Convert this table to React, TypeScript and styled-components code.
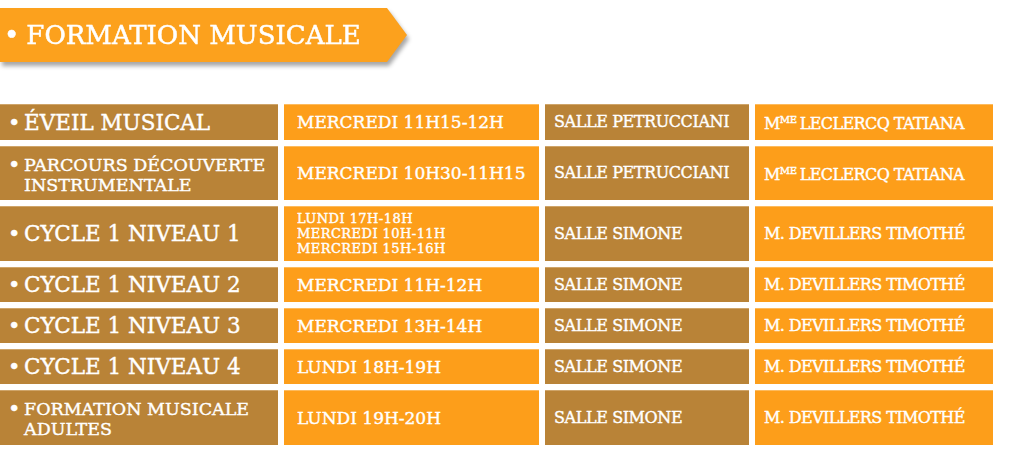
import React from "react";
import styled, { createGlobalStyle } from "styled-components";

const GlobalStyle = createGlobalStyle`
  html, body { margin: 0; padding: 0; background: #ffffff; }
  body { font-family: "DejaVu Serif", "Liberation Serif", serif; color: #ffffff; }
`;

const BROWN = "#b98337";
const ORANGE = "#fd9e1a";

const Page = styled.div`
  width: 1030px;
  height: 463px;
  padding-top: 8px;
  box-sizing: border-box;
  display: flex;
  flex-direction: column;
  gap: 42px;
`;

const BannerShadow = styled.div`
  width: 407px;
  filter: drop-shadow(2px 4px 2px rgba(0, 0, 0, 0.35));
`;

const Banner = styled.h1`
  margin: 0;
  height: 54px;
  background: #fca11d;
  clip-path: polygon(0 0, 387px 0, 407px 50%, 387px 100%, 0 100%);
  display: flex;
  align-items: center;
  padding-left: 4px;
  gap: 7px;
  font-weight: normal;
  font-size: 26px;
  color: #ffffff;
  -webkit-text-stroke: 0.5px #ffffff;
  white-space: nowrap;
`;

const Table = styled.div`
  display: grid;
  grid-template-columns: 278px 255px 204px 238px;
  grid-template-rows: 36px 54px 55px 35px 35px 35px 55px;
  column-gap: 6px;
  row-gap: 6px;
`;

type Tone = "brown" | "orange";

const Cell = styled.div<{ $tone: Tone; $pad: number }>`
  background: ${(p) => (p.$tone === "brown" ? BROWN : ORANGE)};
  box-shadow: inset 0 1px 0 ${(p) => (p.$tone === "brown" ? "#cfa56a" : "#fdbb5e")};
  display: flex;
  align-items: center;
  padding-left: ${(p) => p.$pad}px;
  box-sizing: border-box;
  overflow: hidden;
  white-space: nowrap;
  -webkit-text-stroke: 0.4px #ffffff;
`;

const CourseLabel = styled.div<{ $shift: number }>`
  display: flex;
  align-items: flex-start;
  margin-top: ${(p) => p.$shift}px;
`;

const Bullet = styled.span<{ $lh: number }>`
  font-size: 21px;
  line-height: ${(p) => p.$lh}px;
  height: ${(p) => p.$lh}px;
  width: 16px;
  flex: none;
`;

const Lines = styled.div<{ $size: number; $lh: number; $ls: number }>`
  display: flex;
  flex-direction: column;
  font-size: ${(p) => p.$size}px;
  line-height: ${(p) => p.$lh}px;
  letter-spacing: ${(p) => p.$ls}px;
`;

const Sup = styled.span`
  font-size: 10px;
  vertical-align: 6px;
  margin-right: 3px;
  letter-spacing: -0.3px;
`;

type Row = {
  course: string[];
  time: string[];
  room: string;
  teacher: "mme" | "dev";
};

const rows: Row[] = [
  { course: ["ÉVEIL MUSICAL"], time: ["MERCREDI 11H15-12H"], room: "SALLE PETRUCCIANI", teacher: "mme" },
  { course: ["PARCOURS DÉCOUVERTE", "INSTRUMENTALE"], time: ["MERCREDI 10H30-11H15"], room: "SALLE PETRUCCIANI", teacher: "mme" },
  { course: ["CYCLE 1 NIVEAU 1"], time: ["LUNDI 17H-18H", "MERCREDI 10H-11H", "MERCREDI 15H-16H"], room: "SALLE SIMONE", teacher: "dev" },
  { course: ["CYCLE 1 NIVEAU 2"], time: ["MERCREDI 11H-12H"], room: "SALLE SIMONE", teacher: "dev" },
  { course: ["CYCLE 1 NIVEAU 3"], time: ["MERCREDI 13H-14H"], room: "SALLE SIMONE", teacher: "dev" },
  { course: ["CYCLE 1 NIVEAU 4"], time: ["LUNDI 18H-19H"], room: "SALLE SIMONE", teacher: "dev" },
  { course: ["FORMATION MUSICALE", "ADULTES"], time: ["LUNDI 19H-20H"], room: "SALLE SIMONE", teacher: "dev" },
];

export default function App() {
  return (
    <>
      <GlobalStyle />
      <Page>
        <BannerShadow>
          <Banner>
            <span>•</span>
            <span>FORMATION MUSICALE</span>
          </Banner>
        </BannerShadow>
        <Table>
          {rows.map((r, i) => {
            const twoLine = r.course.length > 1;
            const multiTime = r.time.length > 1;
            const lh = twoLine ? 20 : 24;
            return (
              <React.Fragment key={i}>
                <Cell $tone="brown" $pad={8}>
                  <CourseLabel $shift={twoLine ? 3 : 1}>
                    <Bullet $lh={lh}>•</Bullet>
                    <Lines $size={twoLine ? 17.5 : 21.5} $lh={lh} $ls={0}>
                      {r.course.map((c) => (
                        <span key={c}>{c}</span>
                      ))}
                    </Lines>
                  </CourseLabel>
                </Cell>
                <Cell $tone="orange" $pad={13}>
                  <Lines $size={multiTime ? 13 : 17} $lh={multiTime ? 15 : 22} $ls={multiTime ? 0.45 : 0}>
                    {r.time.map((t) => (
                      <span key={t}>{t}</span>
                    ))}
                  </Lines>
                </Cell>
                <Cell $tone="brown" $pad={9}>
                  <Lines $size={16} $lh={22} $ls={-0.4}>
                    <span>{r.room}</span>
                  </Lines>
                </Cell>
                <Cell $tone="orange" $pad={9}>
                  <Lines $size={16} $lh={22} $ls={-0.6}>
                    {r.teacher === "mme" ? (
                      <span>
                        M<Sup>ME</Sup>LECLERCQ TATIANA
                      </span>
                    ) : (
                      <span>M. DEVILLERS TIMOTHÉ</span>
                    )}
                  </Lines>
                </Cell>
              </React.Fragment>
            );
          })}
        </Table>
      </Page>
    </>
  );
}
